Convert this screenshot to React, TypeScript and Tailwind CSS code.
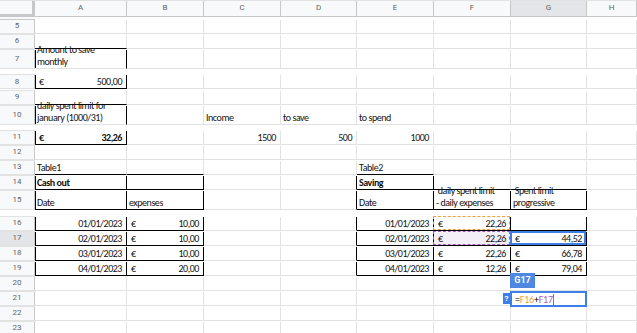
import React from "react";

type Cell = {
  text?: string;
  cur?: boolean;
  right?: boolean;
  bold?: boolean;
  r?: boolean;
  b?: boolean;
  l?: boolean;
};

type Row = { n: number; h: number; cells: Record<number, Cell> };

const box = { r: true, b: true };

const rows: Row[] = [
  { n: 5, h: 15, cells: {} },
  { n: 6, h: 15, cells: { 1: { b: true } } },
  { n: 7, h: 25, cells: { 1: { text: "Amount to save\nmonthly", l: true, r: true } } },
  { n: 8, h: 16, cells: { 1: { cur: true, text: "500,00", l: true, r: true, b: true } } },
  { n: 9, h: 15, cells: { 1: { b: true } } },
  {
    n: 10,
    h: 25,
    cells: {
      1: { text: "daily spent limit for\njanuary (1000/31)", l: true, r: true },
      3: { text: "Income" },
      4: { text: "to save" },
      5: { text: "to spend" },
    },
  },
  {
    n: 11,
    h: 15,
    cells: {
      1: { cur: true, text: "32,26", bold: true, l: true, r: true, b: true },
      3: { text: "1500", right: true },
      4: { text: "500", right: true },
      5: { text: "1000", right: true },
    },
  },
  { n: 12, h: 15, cells: {} },
  { n: 13, h: 15, cells: { 1: { text: "Table1", b: true }, 2: { b: true }, 5: { text: "Table2", b: true } } },
  {
    n: 14,
    h: 15,
    cells: {
      1: { text: "Cash out", bold: true, l: true, ...box },
      2: box,
      4: { r: true },
      5: { text: "Saving", bold: true, ...box },
      6: { b: true },
      7: { b: true },
    },
  },
  {
    n: 15,
    h: 26,
    cells: {
      1: { text: "Date", l: true, ...box },
      2: { text: "expenses", ...box },
      4: { r: true },
      5: { text: "Date", ...box },
      6: { text: " daily spent limit\n- daily expenses", ...box },
      7: { text: " Spent limit\nprogressive", ...box },
    },
  },
];

const data: [string, string, string, string][] = [
  ["01/01/2023", "10,00", "22,26", ""],
  ["02/01/2023", "10,00", "22,26", "44,52"],
  ["03/01/2023", "10,00", "22,26", "66,78"],
  ["04/01/2023", "20,00", "12,26", "79,04"],
];

data.forEach(([d, e, f, g], i) => {
  rows.push({
    n: 16 + i,
    h: 15,
    cells: {
      1: { text: d, right: true, l: true, ...box },
      2: { text: e, cur: true, ...box },
      4: { r: true },
      5: { text: d, right: true, ...box },
      6: { text: f, cur: true, ...box },
      7: g ? { text: g, cur: true, ...box } : box,
    },
  });
});

for (let n = 20; n <= 23; n++) rows.push({ n, h: 15, cells: {} });

const cols = ["A", "B", "C", "D", "E", "F", "G", "H"];
const grid = "grid grid-cols-[35px_92px_77px_77px_76px_77px_77px_76px_1fr]";

function CellView({ c, row, col }: { c?: Cell; row: number; col: number }) {
  const cell = c ?? {};
  const orange = row === 16 && col === 6;
  const purple = row === 17 && col === 6;
  const selected = row === 17 && col === 7;
  return (
    <div
      className={[
        "relative border-r border-b overflow-visible",
        cell.r ? "border-r-black" : "border-r-[#e2e2e2]",
        cell.b ? "border-b-black" : "border-b-[#e2e2e2]",
        cell.l ? "shadow-[inset_1px_0_0_#000]" : "",
        purple ? "bg-[#f4eef6]" : "bg-white",
      ].join(" ")}
    >
      {cell.text !== undefined && (
        <div
          className={[
            "absolute inset-x-0 bottom-0 flex items-end whitespace-pre leading-[12px] text-[10px] tracking-[-0.45px] text-[#111]",
            cell.cur || cell.right ? "justify-between pl-[4px] pr-[4px]" : "pl-[2px]",
            cell.bold ? "font-bold" : "font-medium",
          ].join(" ")}
        >
          {cell.cur && <span>€</span>}
          {cell.right && !cell.cur && <span />}
          <span>{cell.text}</span>
        </div>
      )}
      {orange && <div className="absolute -left-px -top-px right-0 bottom-0 border-[1.5px] border-dashed border-[#f5a030]" />}
      {purple && <div className="absolute -left-px -top-px right-0 bottom-0 border-[1.5px] border-dashed border-[#a25ec4]" />}
      {selected && <div className="absolute -left-px -top-px right-0 bottom-0 border-2 border-[#3c7fe6]" />}
    </div>
  );
}

export default function App() {
  return (
    <div className="w-[637px] h-[333px] overflow-hidden bg-white relative" style={{ fontFamily: "Carlito, Lato, 'Open Sans', sans-serif" }}>
      <div className={`${grid} h-[20px] border-t border-[#e2e2e2]`}>
        <div className="bg-[#f8f9fa] border-r-[3px] border-b-[3px] border-[#c7c7c7]" />
        {cols.map((c) => (
          <div
            key={c}
            className={[
              "flex items-center justify-center border-r border-b border-[#c7c7c7] text-[8px] text-[#5f6368]",
              c === "G" ? "bg-[#e3e5e8]" : "bg-[#f8f9fa]",
            ].join(" ")}
            style={{ fontFamily: "Roboto, Arial, sans-serif" }}
          >
            {c}
          </div>
        ))}
        <div className="bg-[#f8f9fa] border-b border-[#c7c7c7]" />
      </div>
      {rows.map((row) => (
        <div key={row.n} className={grid} style={{ height: row.h }}>
          <div
            className={[
              "flex items-center justify-center border-r border-b border-r-[#c7c7c7] border-b-[#e2e2e2] text-[8px] text-[#5f6368]",
              row.n === 17 ? "bg-[#e3e5e8]" : "bg-[#f8f9fa]",
            ].join(" ")}
            style={{ fontFamily: "Roboto, Arial, sans-serif" }}
          >
            {row.n}
          </div>
          {cols.map((_, i) => (
            <CellView key={i} c={row.cells[i + 1]} row={row.n} col={i + 1} />
          ))}
          <div className="border-b border-[#e2e2e2]" />
        </div>
      ))}

      <div className="absolute left-[510px] top-[273px] w-[25px] h-[15px] bg-[#4d88e2] text-white text-[9px] font-bold flex items-center justify-center" style={{ fontFamily: "Roboto, Arial, sans-serif" }}>
        G17
      </div>
      <div className="absolute left-[503px] top-[293px] w-[7px] h-[11px] bg-[#3c7fe6] text-white text-[8px] font-bold flex items-center justify-center" style={{ fontFamily: "Roboto, Arial, sans-serif" }}>
        ?
      </div>
      <div className="absolute left-[510px] top-[291px] w-[77px] h-[16px] bg-white border-2 border-[#3c7fe6] flex items-center pl-[3px] text-[10px] tracking-[-0.2px]">
        <span className="text-black">=</span>
        <span className="text-[#f2a33c]">F16</span>
        <span className="text-black">+</span>
        <span className="text-[#a25ec4]">F17</span>
        <span className="w-px h-[11px] bg-[#a25ec4]" />
      </div>
    </div>
  );
}
